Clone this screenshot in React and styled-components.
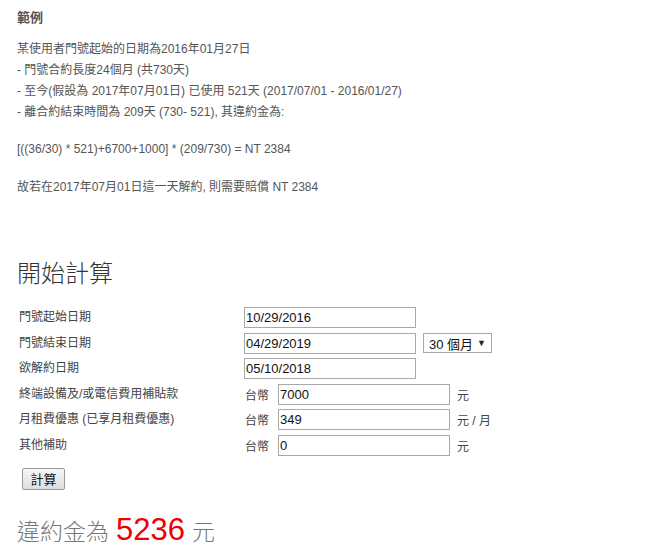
import React from "react";
import styled, { createGlobalStyle } from "styled-components";

const Global = createGlobalStyle`
  html, body {
    margin: 0;
    padding: 0;
    background: #fff;
  }
  body {
    font-family: "Liberation Sans", Arial, "Noto Sans CJK TC", sans-serif;
  }
`;

const Page = styled.div`
  padding: 8px 0 0 17px;
  width: 638px;
  box-sizing: border-box;
`;

const ExampleTitle = styled.div`
  font-size: 13px;
  font-weight: bold;
  color: #555;
  line-height: 20px;
  margin-bottom: 11px;
`;

const Para = styled.p`
  margin: 0 0 ${(p) => p.$gap || 0}px;
  font-size: 12px;
  line-height: 21px;
  color: #555;
`;

const Heading = styled.h2`
  margin: 59px 0 20px;
  font-family: "Noto Sans CJK TC", sans-serif;
  font-weight: 300;
  font-size: 24px;
  line-height: 30px;
  color: #333;
`;

const Form = styled.div`
  display: grid;
  grid-template-columns: 225px auto;
  row-gap: 4.6px;
  padding-left: 2px;
`;

const Label = styled.div`
  font-size: 12px;
  color: #444;
  line-height: 21px;
`;

const Field = styled.div`
  display: flex;
  align-items: center;
  gap: 7px;
  font-size: 12px;
  color: #444;
`;

const Input = styled.input`
  box-sizing: border-box;
  width: 172px;
  height: 21px;
  border: 1px solid #a9a9a9;
  padding: 0 1px;
  font-family: "Liberation Sans", Arial, sans-serif;
  font-size: 13px;
  color: #111;
  outline: none;
`;

const Currency = styled.span`
  width: 26px;
  padding-left: 1px;
`;

const Select = styled.div`
  box-sizing: border-box;
  height: 20px;
  width: 69px;
  border: 1px solid #a9a9a9;
  display: flex;
  align-items: center;
  justify-content: space-between;
  padding: 0 5px 0 5px;
  font-size: 13px;
  color: #111;
`;

const Arrow = styled.span`
  font-size: 9px;
  color: #222;
`;

const Button = styled.button`
  margin: 12px 0 0 5px;
  box-sizing: border-box;
  width: 43px;
  height: 22px;
  border: 1px solid #999;
  border-radius: 2px;
  background: linear-gradient(#f6f6f6, #dedede);
  font-family: "Noto Sans CJK TC", sans-serif;
  font-size: 13px;
  color: #111;
  padding: 0;
`;

const Result = styled.div`
  margin-top: 22px;
  font-family: "Noto Sans CJK TC", sans-serif;
  font-weight: 300;
  font-size: 23px;
  color: #777;
  display: flex;
  align-items: baseline;
  gap: 7px;
`;

const Amount = styled.span`
  font-family: "Liberation Sans", Arial, sans-serif;
  font-size: 31px;
  color: #e00;
`;

const rows = [
  { label: "門號起始日期", value: "10/29/2016" },
  { label: "門號結束日期", value: "04/29/2019", select: true },
  { label: "欲解約日期", value: "05/10/2018" },
  { label: "終端設備及/或電信費用補貼款", value: "7000", money: true, unit: "元" },
  { label: "月租費優惠 (已享月租費優惠)", value: "349", money: true, unit: "元 / 月" },
  { label: "其他補助", value: "0", money: true, unit: "元" },
];

export default function App() {
  return (
    <Page>
      <Global />
      <ExampleTitle>範例</ExampleTitle>
      <Para>某使用者門號起始的日期為2016年01月27日</Para>
      <Para>- 門號合約長度24個月 (共730天)</Para>
      <Para>- 至今(假設為 2017年07月01日) 已使用 521天 (2017/07/01 - 2016/01/27)</Para>
      <Para $gap={16}>- 離合約結束時間為 209天 (730- 521), 其違約金為:</Para>
      <Para $gap={17}>[((36/30) * 521)+6700+1000] * (209/730) = NT 2384</Para>
      <Para>故若在2017年07月01日這一天解約, 則需要賠償 NT 2384</Para>

      <Heading>開始計算</Heading>
      <Form>
        {rows.map((r) => (
          <React.Fragment key={r.label}>
            <Label>{r.label}</Label>
            <Field>
              {r.money && <Currency>台幣</Currency>}
              <Input defaultValue={r.value} />
              {r.select && (
                <Select>
                  30 個月 <Arrow>▼</Arrow>
                </Select>
              )}
              {r.unit && <span>{r.unit}</span>}
            </Field>
          </React.Fragment>
        ))}
      </Form>
      <Button>計算</Button>
      <Result>
        違約金為 <Amount>5236</Amount> 元
      </Result>
    </Page>
  );
}
